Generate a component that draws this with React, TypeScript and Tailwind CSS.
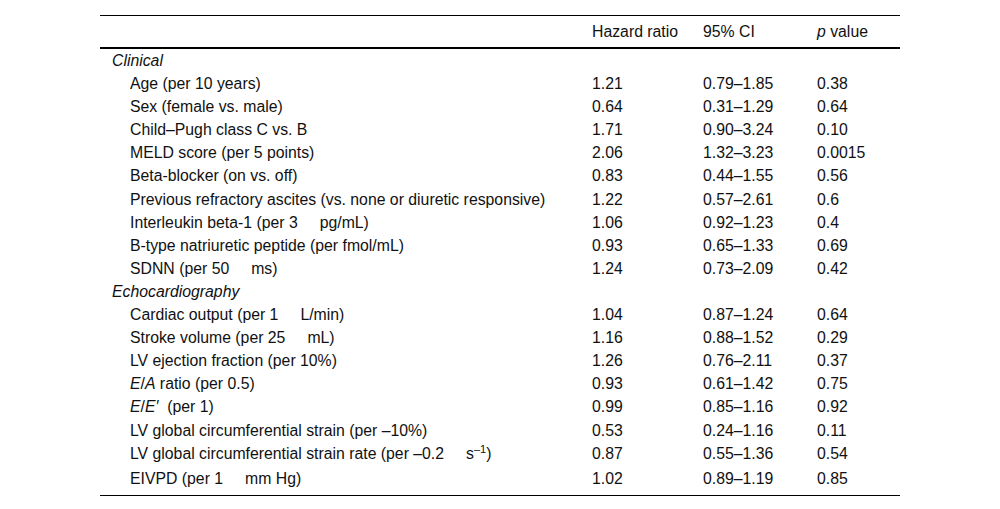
const Gap = () => <span className="inline-block w-[22px]" />;

type Row = {
  label: React.ReactNode;
  hr?: string;
  ci?: string;
  p?: string;
  section?: boolean;
};

const rows: Row[] = [
  { label: "Clinical", section: true },
  { label: "Age (per 10 years)", hr: "1.21", ci: "0.79–1.85", p: "0.38" },
  { label: "Sex (female vs. male)", hr: "0.64", ci: "0.31–1.29", p: "0.64" },
  { label: "Child–Pugh class C vs. B", hr: "1.71", ci: "0.90–3.24", p: "0.10" },
  { label: "MELD score (per 5 points)", hr: "2.06", ci: "1.32–3.23", p: "0.0015" },
  { label: "Beta-blocker (on vs. off)", hr: "0.83", ci: "0.44–1.55", p: "0.56" },
  {
    label: "Previous refractory ascites (vs. none or diuretic responsive)",
    hr: "1.22",
    ci: "0.57–2.61",
    p: "0.6",
  },
  {
    label: (
      <>
        Interleukin beta-1 (per 3<Gap />pg/mL)
      </>
    ),
    hr: "1.06",
    ci: "0.92–1.23",
    p: "0.4",
  },
  { label: "B-type natriuretic peptide (per fmol/mL)", hr: "0.93", ci: "0.65–1.33", p: "0.69" },
  {
    label: (
      <>
        SDNN (per 50<Gap />ms)
      </>
    ),
    hr: "1.24",
    ci: "0.73–2.09",
    p: "0.42",
  },
  { label: "Echocardiography", section: true },
  {
    label: (
      <>
        Cardiac output (per 1<Gap />L/min)
      </>
    ),
    hr: "1.04",
    ci: "0.87–1.24",
    p: "0.64",
  },
  {
    label: (
      <>
        Stroke volume (per 25<Gap />mL)
      </>
    ),
    hr: "1.16",
    ci: "0.88–1.52",
    p: "0.29",
  },
  { label: "LV ejection fraction (per 10%)", hr: "1.26", ci: "0.76–2.11", p: "0.37" },
  {
    label: (
      <>
        <i>E</i>/<i>A</i> ratio (per 0.5)
      </>
    ),
    hr: "0.93",
    ci: "0.61–1.42",
    p: "0.75",
  },
  {
    label: (
      <>
        <i>E</i>/<i>E′</i>&nbsp; (per 1)
      </>
    ),
    hr: "0.99",
    ci: "0.85–1.16",
    p: "0.92",
  },
  {
    label: "LV global circumferential strain (per –10%)",
    hr: "0.53",
    ci: "0.24–1.16",
    p: "0.11",
  },
  {
    label: (
      <>
        LV global circumferential strain rate (per –0.2<Gap />s
        <span className="text-[11px] relative -top-[6px]">–1</span>)
      </>
    ),
    hr: "0.87",
    ci: "0.55–1.36",
    p: "0.54",
  },
  {
    label: (
      <>
        EIVPD (per 1<Gap />mm Hg)
      </>
    ),
    hr: "1.02",
    ci: "0.89–1.19",
    p: "0.85",
  },
];

export default function App() {
  return (
    <div
      className="w-[1000px] h-[509px] bg-white text-[#111] text-[15.8px] leading-[23.1px] pt-[15px]"
      style={{ fontFamily: '"Liberation Sans", Arial, sans-serif' }}
    >
      <div className="mx-[100px] w-[800px]">
        <div className="border-t border-black" />
        <div className="grid grid-cols-[492px_111px_114px_83px] h-[31px] items-center">
          <div />
          <div>Hazard ratio</div>
          <div>95% CI</div>
          <div>
            <i>p</i> value
          </div>
        </div>
        <div className="border-t-2 border-black" />
        <div className="pb-[5px]">
          {rows.map((r, i) => (
            <div key={i} className="grid grid-cols-[492px_111px_114px_83px]">
              <div className={r.section ? "pl-[12px] italic" : "pl-[30px] whitespace-nowrap"}>
                {r.label}
              </div>
              <div>{r.hr}</div>
              <div>{r.ci}</div>
              <div>{r.p}</div>
            </div>
          ))}
        </div>
        <div className="border-t border-black" />
      </div>
    </div>
  );
}
